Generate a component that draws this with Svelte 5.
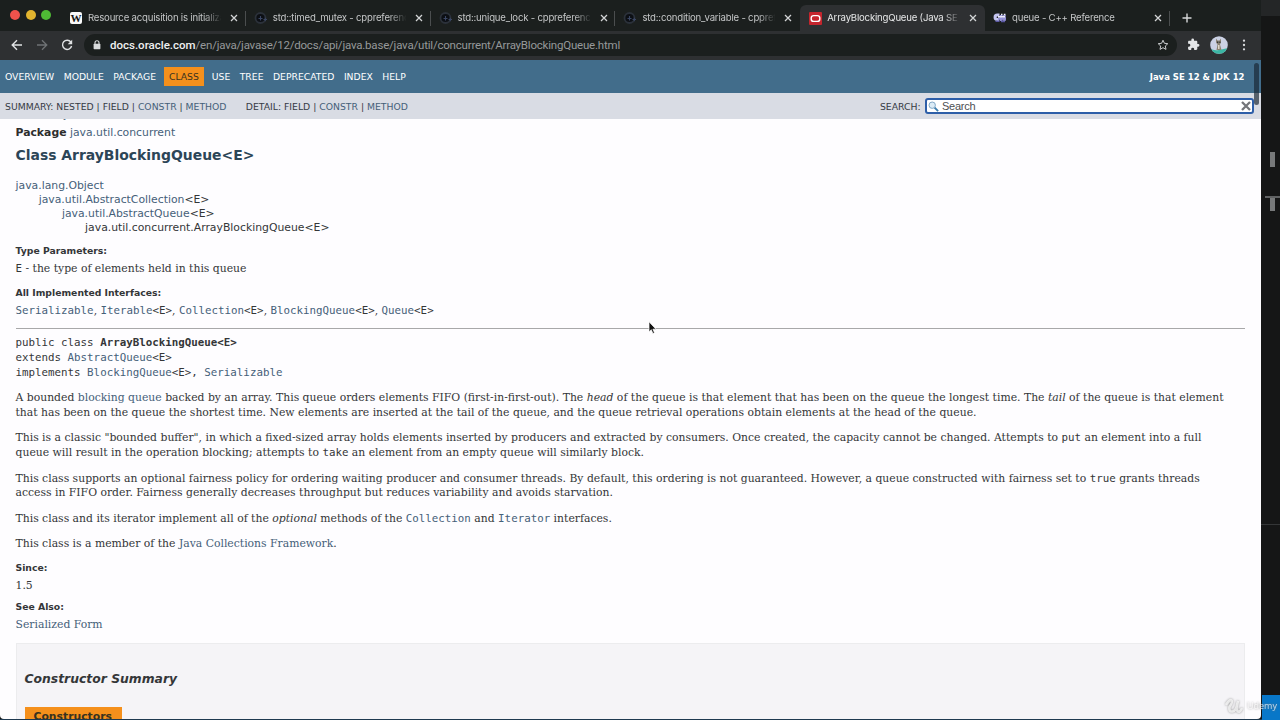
<script>
  const tabs = [
    { icon: 'wiki', title: 'Resource acquisition is initialization' },
    { icon: 'cpp', title: 'std::timed_mutex - cppreference.com' },
    { icon: 'cpp', title: 'std::unique_lock - cppreference.com' },
    { icon: 'cpp', title: 'std::condition_variable - cppreference' },
    { icon: 'oracle', title: 'ArrayBlockingQueue (Java SE 12)', active: true },
    { icon: 'cplus', title: 'queue - C++ Reference' }
  ];
  const nav = ['OVERVIEW', 'MODULE', 'PACKAGE', 'CLASS', 'USE', 'TREE', 'DEPRECATED', 'INDEX', 'HELP'];
</script>

<div class="desktop">
  <div class="window">
    <div class="tabs">
      <div class="lights"><i class="r"></i><i class="y"></i><i class="g"></i></div>
      {#each tabs as t, n}
        <div class="tab t{n}" class:active={t.active}>
          <span class="fav">
            {#if t.icon === 'wiki'}
              <span class="wiki">W</span>
            {:else if t.icon === 'cpp'}
              <svg width="14" height="14" viewBox="0 0 14 14"><circle cx="6.5" cy="7" r="5" fill="#0c0f14" stroke="#2b313a" stroke-width="1.8" /><path d="M4.500 7.500h4M6.500 5v4.500M9.500 8.500h3.500M11.300 6.800v3.400" stroke="#3a4663" stroke-width="1.100" /></svg>
            {:else if t.icon === 'oracle'}
              <svg width="13" height="13" viewBox="0 0 13 13"><rect width="13" height="13" rx="1" fill="#c5252d" /><rect x="2.200" y="3.600" width="8.600" height="5.800" rx="2.500" fill="none" stroke="#fff" stroke-width="1.400" /></svg>
            {:else}
              <svg width="14" height="12" viewBox="0 0 14 12"><path d="M6.500 3H4.300a2 2 0 0 0 0 4.500h2" fill="none" stroke="#c3c4f0" stroke-width="3" /><path d="M5 6.500h8M8.300 3v6M11.400 3v6" stroke="#9391d6" stroke-width="2.600" /><path d="M8 2.600h1.500M10.800 2.600h1.700M5 4.800h7" stroke="#eeeefd" stroke-width="1.500" /><path d="M2.500 9.300h4M8 9.600h4" stroke="#5a58a2" stroke-width="1.500" /></svg>
            {/if}
          </span>
          <span class="title">{t.title}</span>
          <svg class="x" width="8" height="8" viewBox="0 0 8 8"><path d="M1 1l6 6M7 1L1 7" stroke="#d3d5d6" stroke-width="1.250" /></svg>
        </div>
      {/each}
      <svg class="plus" width="10" height="10" viewBox="0 0 10 10"><path d="M5 .5v9M.5 5h9" stroke="#d6d8d9" stroke-width="1.400" /></svg>
    </div>

    <div class="toolbar">
      <svg class="back" width="12" height="12" viewBox="0 0 12 12"><path d="M11 6H1.400M6 1.200L1.200 6 6 10.800" fill="none" stroke="#e0e2e4" stroke-width="1.400" /></svg>
      <svg class="fwd" width="12" height="12" viewBox="0 0 12 12"><path d="M1 6h9.600M6 1.200L10.800 6 6 10.800" fill="none" stroke="#6f7275" stroke-width="1.300" /></svg>
      <svg class="reload" width="12" height="12" viewBox="0 0 12 12"><path d="M9.900 3.200A4.600 4.600 0 1 0 10.600 7" fill="none" stroke="#e0e2e4" stroke-width="1.400" /><path d="M11.200.8v4.500H6.700z" fill="#e0e2e4" /></svg>
      <div class="omni">
        <svg class="lock" width="8" height="10" viewBox="0 0 8 10"><path d="M2 4V2.800a2 2 0 0 1 4 0V4" fill="none" stroke="#d9dbdd" stroke-width="1.100" /><rect x=".6" y="3.700" width="6.800" height="5.600" rx=".7" fill="#d9dbdd" /></svg>
        <span class="url"><b>docs.oracle.com</b><span>/en/java/javase/12/docs/api/java.base/java/util/concurrent/ArrayBlockingQueue.html</span></span>
        <svg class="star" width="12" height="12" viewBox="0 0 12 12"><path d="M6 1.200l1.400 3.100 3.400.4-2.500 2.300.7 3.400L6 8.700l-3 1.700.7-3.400L1.200 4.700l3.400-.4z" fill="none" stroke="#c9cbcd" stroke-width="1" /></svg>
      </div>
      <svg class="puzzle" width="13" height="13" viewBox="0 0 24 24"><path fill="#e4e6e8" d="M20.500 11H19V7c0-1.100-.9-2-2-2h-4V3.500a2.500 2.500 0 0 0-5 0V5H4c-1.100 0-2 .9-2 2v3.800h1.500a2.700 2.700 0 0 1 0 5.400H2V20c0 1.100.9 2 2 2h3.800v-1.500a2.700 2.700 0 0 1 5.400 0V22H17c1.100 0 2-.9 2-2v-4h1.500a2.500 2.500 0 0 0 0-5z" /></svg>
      <svg class="avatar" width="18" height="18" viewBox="0 0 18 18"><defs><clipPath id="face"><circle cx="9" cy="9" r="8.800" /></clipPath></defs><g clip-path="url(#face)"><rect width="18" height="18" fill="#cbd1e4" /><path d="M0 12.500q4 2.500 9 1.500t9-2v6H0z" fill="#3bb6a4" /><path d="M6 2.500l1.500 2h2l1.500-2v4l-1 2 1.500 5.500h-5l1-5.500-1.500-2z" fill="#8b8373" /><path d="M7 5.500h1.300V7H7zM9.300 5.500h1.200V7H9.300z" fill="#30363a" /><path d="M8 9h1.500v4H8z" fill="#ddd7c9" /></g></svg>
      <svg class="more" width="4" height="12" viewBox="0 0 4 12"><g fill="#d9dbdd"><circle cx="2" cy="1.700" r="1.150" /><circle cx="2" cy="6" r="1.150" /><circle cx="2" cy="10.300" r="1.150" /></g></svg>
    </div>

    <div class="topnav">
      <div class="links">{#each nav as n}<span class:current={n === 'CLASS'}>{n}</span>{/each}</div>
      <strong>Java SE 12 &amp; JDK 12</strong>
    </div>
    <div class="subnav">
      <span class="sum">SUMMARY: NESTED | FIELD | <a>CONSTR</a> | <a>METHOD</a></span>
      <span class="det">DETAIL: FIELD | <a>CONSTR</a> | <a>METHOD</a></span>
      <label for="q">SEARCH:</label>
      <div class="search" id="q">
        <svg width="11" height="11" viewBox="0 0 11 11"><path d="M6.500 6.500l3.600 3.600" stroke="#3d7eae" stroke-width="1.800" /><circle cx="4.200" cy="4.200" r="3.200" fill="#dcecf6" stroke="#83a9c7" stroke-width="1" /></svg>
        <span>Search</span>
        <svg width="10" height="10" viewBox="0 0 10 10"><path d="M1 1l8 8M9 1L1 9" stroke="#737579" stroke-width="2.300" /></svg>
      </div>
    </div>

    <main>
      <div class="sans module"><b>Module</b> <a>java.base</a></div>
      <div class="sans pkg"><b>Package</b> <a>java.util.concurrent</a></div>
      <h2>Class ArrayBlockingQueue&lt;E&gt;</h2>
      <ul class="sans tree">
        <li><a>java.lang.Object</a></li>
        <li><a>java.util.AbstractCollection</a>&lt;E&gt;</li>
        <li><a>java.util.AbstractQueue</a>&lt;E&gt;</li>
        <li>java.util.concurrent.ArrayBlockingQueue&lt;E&gt;</li>
      </ul>
      <dl>
        <dt>Type Parameters:</dt>
        <dd><code>E</code> - the type of elements held in this queue</dd>
        <dt class="impl">All Implemented Interfaces:</dt>
        <dd><code><a>Serializable</a></code>, <code><a>Iterable</a>&lt;E&gt;</code>, <code><a>Collection</a>&lt;E&gt;</code>, <code><a>BlockingQueue</a>&lt;E&gt;</code>, <code><a>Queue</a>&lt;E&gt;</code></dd>
      </dl>
      <hr />
      <pre>public class <b>ArrayBlockingQueue&lt;E&gt;</b>
extends <a>AbstractQueue</a>&lt;E&gt;
implements <a>BlockingQueue</a>&lt;E&gt;, <a>Serializable</a></pre>
      <div class="prose">
        <p>A bounded <a>blocking queue</a> backed by an array. This queue orders elements FIFO (first-in-first-out). The <em>head</em> of the queue is that element that has been on the queue the longest time. The <em>tail</em> of the queue is that element<br />that has been on the queue the shortest time. New elements are inserted at the tail of the queue, and the queue retrieval operations obtain elements at the head of the queue.</p>
        <p>This is a classic "bounded buffer", in which a fixed-sized array holds elements inserted by producers and extracted by consumers. Once created, the capacity cannot be changed. Attempts to <code>put</code> an element into a full<br />queue will result in the operation blocking; attempts to <code>take</code> an element from an empty queue will similarly block.</p>
        <p>This class supports an optional fairness policy for ordering waiting producer and consumer threads. By default, this ordering is not guaranteed. However, a queue constructed with fairness set to <code>true</code> grants threads<br />access in FIFO order. Fairness generally decreases throughput but reduces variability and avoids starvation.</p>
        <p>This class and its iterator implement all of the <em>optional</em> methods of the <code><a>Collection</a></code> and <code><a>Iterator</a></code> interfaces.</p>
        <p>This class is a member of the <a>Java Collections Framework</a>.</p>
      </div>
      <dl class="notes">
        <dt>Since:</dt>
        <dd>1.5</dd>
        <dt class="see">See Also:</dt>
        <dd><a>Serialized Form</a></dd>
      </dl>
      <section>
        <h3>Constructor Summary</h3>
        <div class="caption">Constructors</div>
      </section>
    </main>
    <div class="thumb"></div>
  </div>

  <div class="editor">
    <div class="strip"></div>
    <div class="mark a"></div>
    <div class="mark b"></div>
    <div class="rule"></div>
    <div class="status"></div>
  </div>
  <div class="bottom"></div>
  <svg class="cursor" width="9" height="14" viewBox="0 0 9 14"><path d="M1 .8v10l2.300-2.100 1.600 3.800 1.600-.7-1.600-3.600H8z" fill="#111" stroke="#fff" stroke-width=".7" /></svg>
  <div class="badge"><svg width="18" height="16" viewBox="0 0 18 16"><path d="M1.500 6Q5 1 6.500 2.500T4.500 9q-.8 5 3 4.500T13 3q-2.500 8-.5 10t4-2" fill="none" stroke="currentColor" stroke-width="2.600" stroke-linecap="round" /></svg><span>Udemy</span></div>
</div>

<style>
  :global(body) { margin: 0; overflow: hidden; background: #151616; }
  .desktop { position: relative; display: flex; width: 1280px; height: 720px; overflow: hidden; background: #151616; font-family: 'DejaVu Sans', sans-serif; }
  .window { position: relative; display: flex; flex-direction: column; width: 1260.5px; height: 719px; flex: none; overflow: hidden; background: #fefdff; border-radius: 0 0 4px 4px; }
  a { color: #456079; }
  svg { display: block; flex: none; }

  .tabs { display: flex; height: 31px; flex: none; background: #1b1f1e; font-family: Inter, sans-serif; font-size: 9.6px; letter-spacing: -0.2px; color: #c4c6c7; }
  .lights { display: flex; gap: 5.5px; box-sizing: border-box; width: 61px; padding: 10px 0 0 10px; flex: none; }
  .lights i { width: 10px; height: 10px; border-radius: 50%; }
  .r { background: #f0524c; }
  .y { background: #e1b42f; }
  .g { background: #4fba35; }
  .tab { display: flex; align-items: center; box-sizing: border-box; flex: none; width: 184.8px; height: 26px; margin-top: 5px; padding: 0 0 0 8px; }
  .t0, .t1, .t2, .t5 { background: linear-gradient(#4b4e4f, #4b4e4f) right 6px / 1px 15px no-repeat; }
  .fav { display: flex; justify-content: center; align-items: center; width: 14px; margin-right: 5px; flex: none; }
  .wiki { width: 12px; height: 12px; border-radius: 2px; background: #fafafa; color: #161616; font: 700 11px/12px 'Liberation Serif', serif; text-align: center; }
  .title { width: 135px; flex: none; overflow: hidden; white-space: nowrap; line-height: 16px; -webkit-mask-image: linear-gradient(90deg, #000 86%, transparent 99%); mask-image: linear-gradient(90deg, #000 86%, transparent 99%); }
  .x { margin-left: 7px; }
  .active { background: #2e3032; border-radius: 6px 6px 0 0; color: #e7e8e9; }
  .plus { margin: 13px 0 0 12px; }

  .toolbar { display: flex; align-items: center; box-sizing: border-box; height: 29px; flex: none; padding-bottom: 2px; background: #2e3032; }
  .back { margin-left: 11px; }
  .fwd { margin-left: 13px; }
  .reload { margin-left: 13px; }
  .omni { display: flex; align-items: center; box-sizing: border-box; width: 1093px; height: 22px; margin-left: 11px; padding: 0 8px 0 9px; border-radius: 11px; background: #1b1f1e; }
  .url { margin-left: 9px; flex: 1; white-space: nowrap; font: 11.5px/20px Roboto, sans-serif; color: #96999a; }
  .url b { font-weight: 500; color: #eff0f0; }
  .url span { letter-spacing: -0.2px; }
  .puzzle { margin-left: 10px; }
  .avatar { margin-left: 10px; }
  .more { margin-left: 14px; }

  .topnav { display: flex; align-items: center; justify-content: space-between; box-sizing: border-box; height: 33px; flex: none; padding: 0 16px 0 5px; background: #426d8b; color: #fff; font-size: 9.25px; }
  .topnav strong { font-size: 8.5px; }
  .links { display: flex; align-items: center; gap: 9.45px; }
  .links .current { margin: 0 -1.5px; padding: 0 5px; background: #f5901c; color: #39321f; line-height: 19px; }
  .subnav { position: relative; z-index: 1; display: flex; align-items: center; box-sizing: border-box; height: 26px; flex: none; padding: 0 6.5px 0 5px; background: #d9dce4; color: #363b44; font-size: 9.28px; }
  .det { margin-left: 19.3px; }
  label { margin-left: auto; }
  .search { display: flex; align-items: center; box-sizing: border-box; width: 329px; height: 16px; margin-left: 4.5px; padding: 0 1px; border: 2px solid #2d5ea8; border-radius: 3px; background: #fff; color: #4d4f52; font: 11px/13px 'Liberation Sans', sans-serif; }
  .search span { flex: 1; margin-left: 3px; letter-spacing: -0.25px; }

  main { flex: 1; min-height: 0; overflow: hidden; padding: 0 15.5px; color: #343638; }
  .sans { font-size: 10.83px; line-height: 14px; }
  .module { margin-top: -11px; }
  .pkg { margin-top: 4px; color: #2d2d2d; }
  h2 { margin: 7px 0 0; font-size: 13.93px; line-height: 16px; color: #2c4557; }
  .tree { list-style: none; margin: 16px 0 0; padding: 0; }
  .tree li:nth-child(2) { padding-left: 23.2px; }
  .tree li:nth-child(3) { padding-left: 46.4px; }
  .tree li:nth-child(4) { padding-left: 69.6px; }
  dl { margin: 9px 0 0; }
  dt { font-size: 9.28px; font-weight: 700; line-height: 14px; }
  dd { margin: 3px 0 0; font: 10.82px/15px 'DejaVu Serif', serif; }
  .impl { margin-top: 10px; }
  code, pre { font: 10.82px/14.7px 'DejaVu Sans Mono', monospace; }
  dd code { line-height: 14px; }
  hr { height: 1px; margin: 10px 0 0; border: 0; background: #a8a8a9; }
  pre { margin: 7.3px 0 0; }
  .prose { margin-top: 10.8px; font: 10.828px/14.7px 'DejaVu Serif', serif; white-space: nowrap; }
  .prose p { margin: 0 0 10.8px; }
  .notes { margin-top: -1.8px; }
  .see { margin-top: 7px; }
  section { box-sizing: border-box; height: 100px; margin-top: 11px; padding: 27px 8px 0; border: 1px solid #ececee; background: #f5f4f7; }
  h3 { margin: 0; font: italic 700 12.37px/16px 'DejaVu Sans', sans-serif; }
  .caption { width: 97px; height: 20px; margin-top: 20px; padding-left: 9px; box-sizing: border-box; background: #f5901c; color: #39321f; font-size: 10.82px; font-weight: 700; line-height: 20px; }
  .thumb { position: absolute; z-index: 2; left: 1254px; top: 63px; width: 5px; height: 42px; border-radius: 3px; background: rgba(25, 38, 51, .68); }

  .editor { position: relative; flex: 1; background: #151616; }
  .strip { position: absolute; inset: 0 0 auto 0; height: 16px; background: #242627; }
  .mark { position: absolute; left: 9px; width: 5px; height: 15px; background: #77797a; }
  .a { top: 152px; }
  .b { top: 196px; }
  .b::before { content: ''; position: absolute; left: -5px; top: 0; width: 16px; height: 1.5px; background: #606263; }
  .rule { position: absolute; top: 524px; width: 100%; height: 1px; background: #343637; }
  .status { position: absolute; bottom: 0; top: 695px; left: 1px; width: 100%; background: #0877c8; }
  .bottom { position: absolute; left: 0; bottom: 0; width: 1262px; height: 1.5px; background: #1e3950; }
  .cursor { position: absolute; left: 647.5px; top: 321px; }
  .badge { position: absolute; display: flex; align-items: center; left: 1225px; top: 698px; color: rgba(255, 255, 255, .72); font: 500 9px/16px 'Open Sans', sans-serif; filter: drop-shadow(0 0 1px #777); }
  .badge span { margin-left: 4px; }
</style>
